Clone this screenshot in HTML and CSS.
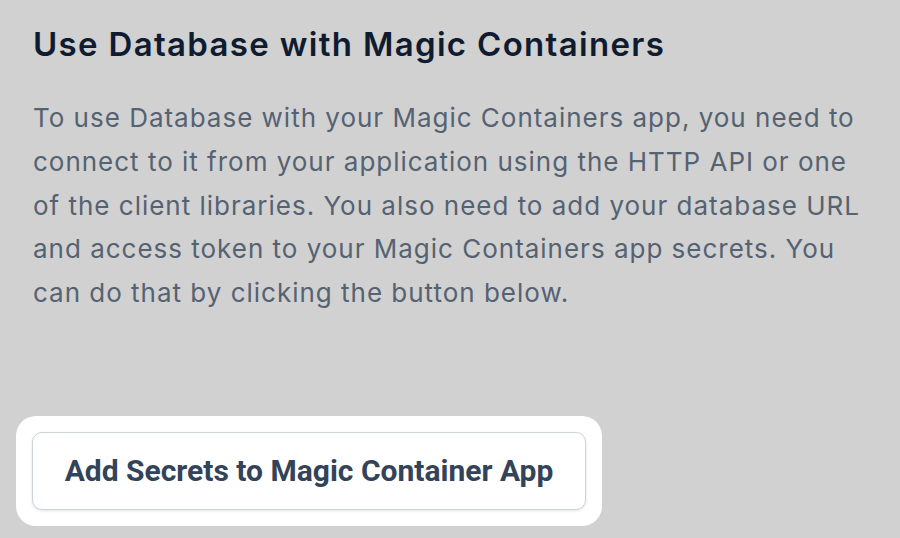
FILE: index.html
```html
<!DOCTYPE html>
<html lang="en">
<head>
<meta charset="utf-8">
<title>Use Database with Magic Containers</title>
<link rel="stylesheet" href="styles.css">
</head>
<body>
<main class="panel">
  <h2 class="title">Use Database with Magic Containers</h2>
  <p class="desc">To use Database with your Magic Containers app, you need to connect to it from your application using the HTTP API or one of the client libraries. You also need to add your database URL and access token to your Magic Containers app secrets. You can do that by clicking the button below.</p>
  <div class="halo">
    <button class="btn" type="button">Add Secrets to Magic Container App</button>
  </div>
</main>
</body>
</html>
```

FILE: styles.css
```css
html, body {
  margin: 0;
  padding: 0;
  background: #d1d1d1;
}
body {
  width: 900px;
  height: 538px;
  overflow: hidden;
}
.panel {
  padding: 24px 0 0 33px;
}
.title {
  margin: 0;
  font-family: Inter, "Noto Sans", sans-serif;
  font-size: 33px;
  line-height: 40px;
  font-weight: 600;
  color: #0f1b30;
  letter-spacing: 0.04em;
}
.desc {
  margin: 32px 0 0 0;
  width: 835px;
  font-family: Inter, "Noto Sans", sans-serif;
  font-size: 26px;
  line-height: 43.75px;
  font-weight: 400;
  color: #556272;
  letter-spacing: 0.038em;
}
.halo {
  display: inline-flex;
  margin: 101px 0 0 -17px;
  padding: 16px;
  background: #ffffff;
  border-radius: 20px;
}
.btn {
  width: 554px;
  height: 78px;
  box-sizing: border-box;
  border: 1.5px solid #cdd3da;
  border-radius: 10px;
  background: #ffffff;
  box-shadow: 0 1px 3px rgba(15, 23, 42, 0.12);
  font-family: Roboto, "Liberation Sans", sans-serif;
  font-size: 30px;
  font-weight: 700;
  color: #334359;
  padding: 0;
  cursor: pointer;
}
```
